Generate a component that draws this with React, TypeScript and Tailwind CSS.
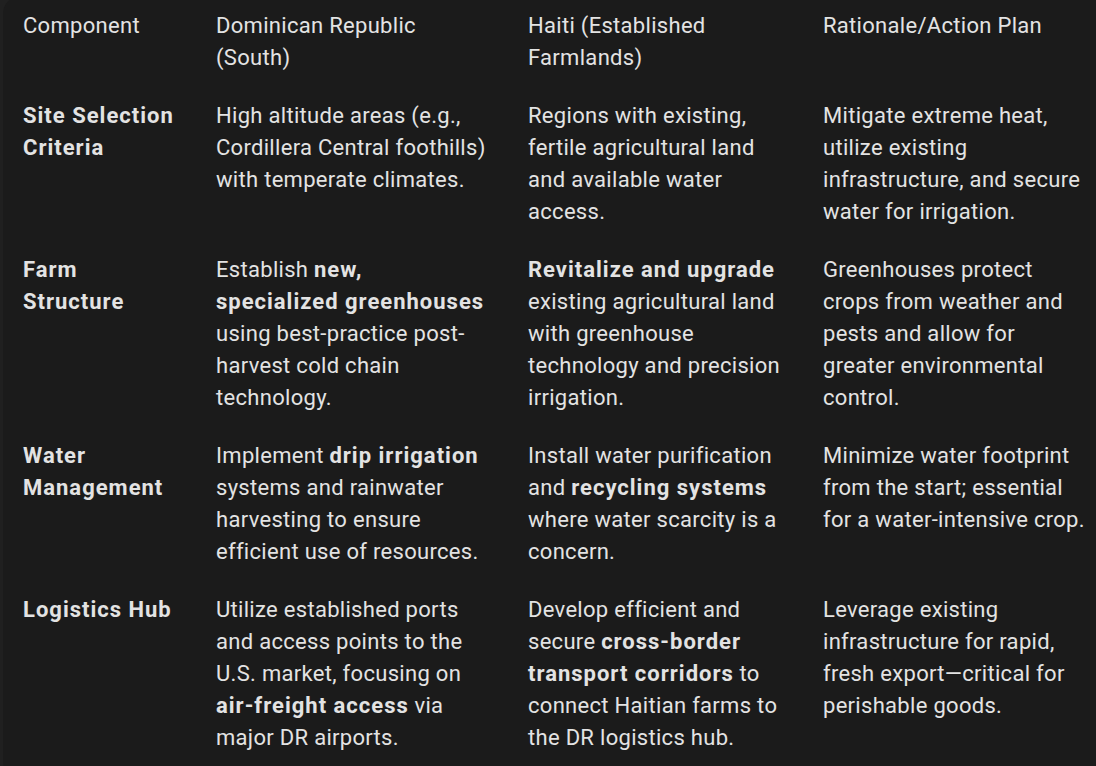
import * as React from 'react';

type Cell = React.ReactNode;

const B = ({ children }: { children: React.ReactNode }) => (
  <b className="font-bold tracking-[1px]">{children}</b>
);

const rows: { label: string; cells: Cell[] }[] = [
  {
    label: 'Site Selection Criteria',
    cells: [
      <>High altitude areas (e.g., Cordillera Central foothills) with temperate climates.</>,
      <>Regions with existing, fertile agricultural land and available water access.</>,
      <>Mitigate extreme heat, utilize existing infrastructure, and secure water for irrigation.</>,
    ],
  },
  {
    label: 'Farm Structure',
    cells: [
      <>Establish <B>new, specialized greenhouses</B> using best-practice post-harvest cold chain technology.</>,
      <><B>Revitalize and upgrade</B> existing agricultural land with greenhouse technology and precision irrigation.</>,
      <>Greenhouses protect crops from weather and pests and allow for greater environmental control.</>,
    ],
  },
  {
    label: 'Water Management',
    cells: [
      <>Implement <B>drip irrigation</B> systems and rainwater harvesting to ensure efficient use of resources.</>,
      <>Install water purification and <B>recycling systems</B> where water scarcity is a concern.</>,
      <>Minimize water footprint from the start; essential for a water-intensive crop.</>,
    ],
  },
  {
    label: 'Logistics Hub',
    cells: [
      <>Utilize established ports and access points to the U.S. market, focusing on <B>air-freight access</B> via major DR airports.</>,
      <>Develop efficient and secure <B>cross-border transport corridors</B> to connect Haitian farms to the DR logistics hub.</>,
      <>Leverage existing infrastructure for rapid, fresh export—critical for perishable goods.</>,
    ],
  },
];

const headers = ['Component', 'Dominican Republic (South)', 'Haiti (Established Farmlands)', 'Rationale/Action Plan'];

// column template: label | DR | Haiti | rationale
const grid = 'grid grid-cols-[193px_312px_295px_290px]';
const pads = ['pr-[37px]', 'pr-[39px]', 'pr-[33px]', 'pr-[22px]'];

export default function App() {
  return (
    <div
      className="w-[1096px] h-[766px] overflow-hidden bg-[#202020] pl-[3px] text-[22px] leading-[32px] tracking-[0.3px] text-[#e3e3e3]"
      style={{ fontFamily: 'Roboto, "Noto Sans", sans-serif' }}
    >
      <div className="-mt-[3px] w-[1110px] rounded-2xl bg-[#1b1b1b] pl-[20px] pb-[11px]">
        {/* Header */}
        <div className={`${grid} pt-[13px] pb-[13px]`}>
          {headers.map((h, i) => (
            <div key={h} className={pads[i]}>{h}</div>
          ))}
        </div>

        {/* Body rows */}
        {rows.map((row) => (
          <div key={row.label} className={`${grid} py-[13px]`}>
            <div className={`${pads[0]} font-bold tracking-[1px]`}>{row.label}</div>
            {row.cells.map((c, i) => (
              <div key={i} className={pads[i + 1]}>{c}</div>
            ))}
          </div>
        ))}
      </div>
    </div>
  );
}
